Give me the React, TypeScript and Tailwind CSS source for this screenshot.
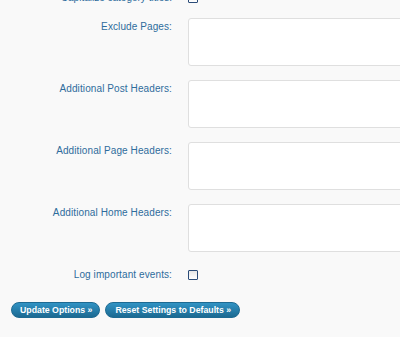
const rows = ['Exclude Pages:', 'Additional Post Headers:', 'Additional Page Headers:', 'Additional Home Headers:'];

function Checkbox() {
    return (
        <div className="w-[10px] h-[10px] border border-[#2b4c78] bg-gradient-to-b from-[#e6e6e6] to-white rounded-[1px]" />
    );
}

export default function App() {
    return (
        <div
            className="w-[400px] h-[337px] overflow-hidden bg-[#f9f9f9] text-[10px] text-[#2e6c9c]"
            style={{ fontFamily: '"Liberation Sans", Arial, sans-serif' }}
        >
            <div className="-mt-[7px] pl-[10px]">
                {/* row cut off at the top */}
                <div className="grid grid-cols-[162px_1fr] gap-x-[16px] items-start h-[25px]">
                    <div className="text-right leading-[10px]">Capitalize category titles:</div>
                    <Checkbox />
                </div>

                {rows.map((label) => (
                    <div key={label} className="grid grid-cols-[162px_1fr] gap-x-[16px] items-start mb-[14px]">
                        <div className="text-right pt-[3px] leading-[12px] tracking-[0.1px]">{label}</div>
                        <div className="w-[300px] h-[48px] bg-white border border-[#dfdfdf] rounded-[3px]" />
                    </div>
                ))}

                <div className="grid grid-cols-[162px_1fr] gap-x-[16px] items-start mt-[18px]">
                    <div className="text-right leading-[12px] -mt-[1px] tracking-[0.1px]">Log important events:</div>
                    <Checkbox />
                </div>
            </div>

            <div className="flex gap-[5px] pl-[11px] mt-[21px]">
                <button className="h-[16px] pl-[8px] pr-[7px] rounded-full bg-gradient-to-b from-[#3193c4] to-[#1c6a92] text-white font-bold text-[8.75px] leading-[14px] border border-[#1d6a92]">
                    Update Options »
                </button>
                <button className="h-[16px] pl-[9px] pr-[8px] rounded-full bg-gradient-to-b from-[#3193c4] to-[#1c6a92] text-white font-bold text-[8.75px] leading-[14px] border border-[#1d6a92]">
                    Reset Settings to Defaults »
                </button>
            </div>
        </div>
    );
}
